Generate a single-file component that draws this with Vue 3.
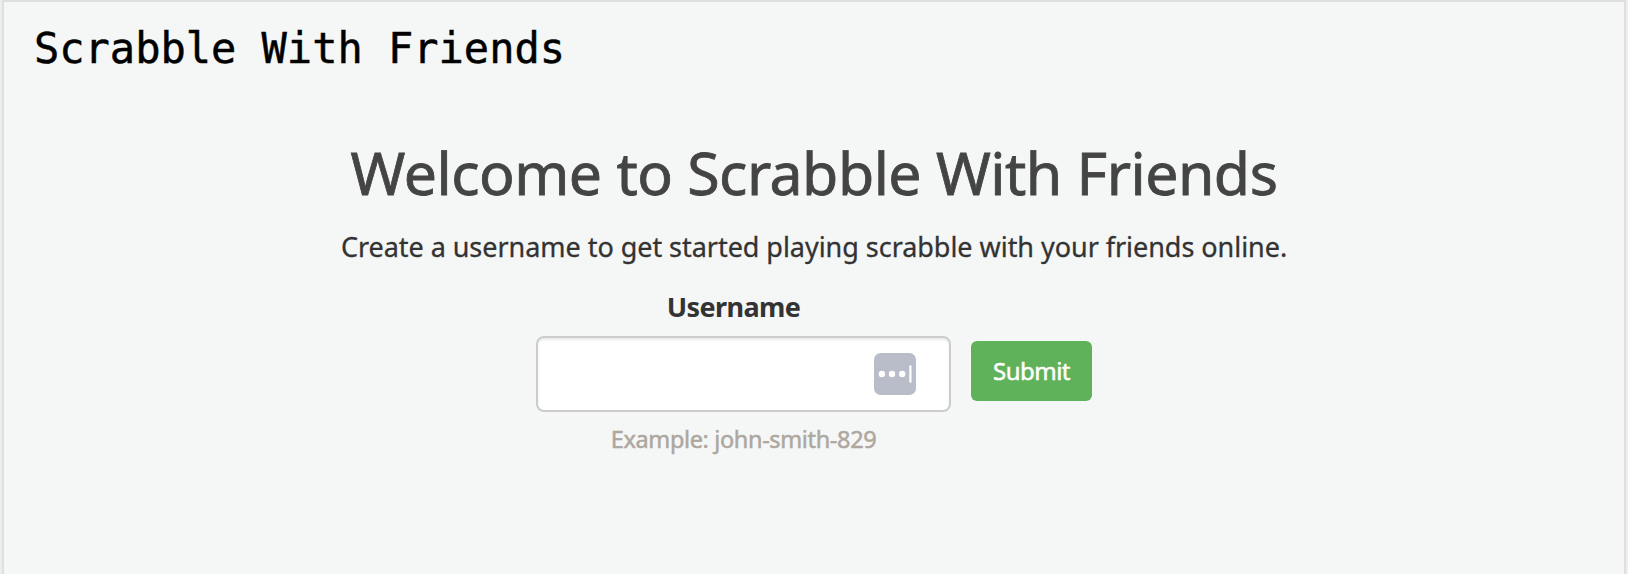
<script setup>
import { ref } from 'vue'
const username = ref('')
</script>

<template>
  <div class="page">
    <div class="panel">
      <header class="brand">Scrabble With Friends</header>
      <main class="content">
        <h1>Welcome to Scrabble With Friends</h1>
        <p class="lead">Create a username to get started playing scrabble with your friends online.</p>
        <form class="form" @submit.prevent>
          <div class="field">
            <label for="username">Username</label>
            <div class="control">
              <input id="username" v-model="username" type="text" autocomplete="off" />
              <svg class="fill-icon" width="42" height="42" viewBox="0 0 42 42">
                <rect width="42" height="42" rx="6.5" fill="#b9bdc9" />
                <circle cx="7.9" cy="21" r="3.2" fill="#fff" />
                <circle cx="18" cy="21" r="3.2" fill="#fff" />
                <circle cx="28.2" cy="21" r="3.2" fill="#fff" />
                <rect x="35.3" y="12.3" width="2.2" height="17.4" rx="1" fill="#fff" />
              </svg>
            </div>
            <small>Example: john-smith-829</small>
          </div>
          <button type="submit">Submit</button>
        </form>
      </main>
    </div>
  </div>
</template>

<style>
body { background: #ededed; }
</style>

<style scoped>
.page {
  height: 574px;
  padding: 0 2px;
  box-sizing: border-box;
  overflow: hidden;
  font-family: "Noto Sans", sans-serif;
  color: #333;
}
.panel {
  height: 574px;
  box-sizing: border-box;
  border: 2px solid #dfdfdf;
  border-bottom: 0;
  background: #f5f7f6;
}
.brand {
  height: 90px;
  padding-left: 30px;
  box-sizing: border-box;
  font: 42px/94px "DejaVu Sans Mono", monospace;
  color: #000;
  -webkit-text-stroke: 0.5px #000;
  white-space: nowrap;
}
.content {
  display: flex;
  flex-direction: column;
  align-items: center;
}
h1 {
  margin: 38px 0 0;
  font-size: 59px;
  line-height: 84px;
  font-weight: 400;
  letter-spacing: -0.52px;
  color: #444;
  -webkit-text-stroke: 0.8px #444;
  white-space: nowrap;
}
.lead {
  margin: 13px 0 0;
  font-size: 27px;
  line-height: 40px;
  letter-spacing: -0.04px;
  -webkit-text-stroke: 0.3px #333;
  white-space: nowrap;
}
.form {
  display: flex;
  align-items: flex-start;
  gap: 20px;
  width: 556px;
  margin-top: 20px;
}
.field {
  display: flex;
  flex-direction: column;
  align-items: center;
  width: 415px;
}
label {
  height: 49px;
  margin-right: 20px;
  font-size: 27px;
  line-height: 40px;
  font-weight: 700;
  letter-spacing: -0.6px;
}
.control {
  display: flex;
  align-items: center;
  justify-content: flex-end;
  width: 415px;
  height: 76px;
  box-sizing: border-box;
  padding-right: 33px;
  border: 2px solid #ccc;
  border-radius: 8px;
  background: #fff;
  box-shadow: inset 0 2px 2px rgba(0, 0, 0, 0.075);
}
input {
  flex: 1;
  min-width: 0;
  height: 68px;
  padding: 0 24px;
  border: 0;
  outline: 0;
  background: transparent;
  font: inherit;
  font-size: 28px;
}
.fill-icon { flex: none; }
small {
  margin-top: 11px;
  font-size: 23.5px;
  line-height: 32px;
  letter-spacing: -0.36px;
  color: #aea79f;
  -webkit-text-stroke: 0.5px #aea79f;
  white-space: nowrap;
}
button {
  width: 121px;
  height: 60px;
  margin-top: 54px;
  padding: 0;
  border: 0;
  border-radius: 6px;
  background: #5fb259;
  color: #fff;
  font: 24px/60px "Noto Sans", sans-serif;
  letter-spacing: -0.5px;
  -webkit-text-stroke: 0.5px #fff;
}
</style>
